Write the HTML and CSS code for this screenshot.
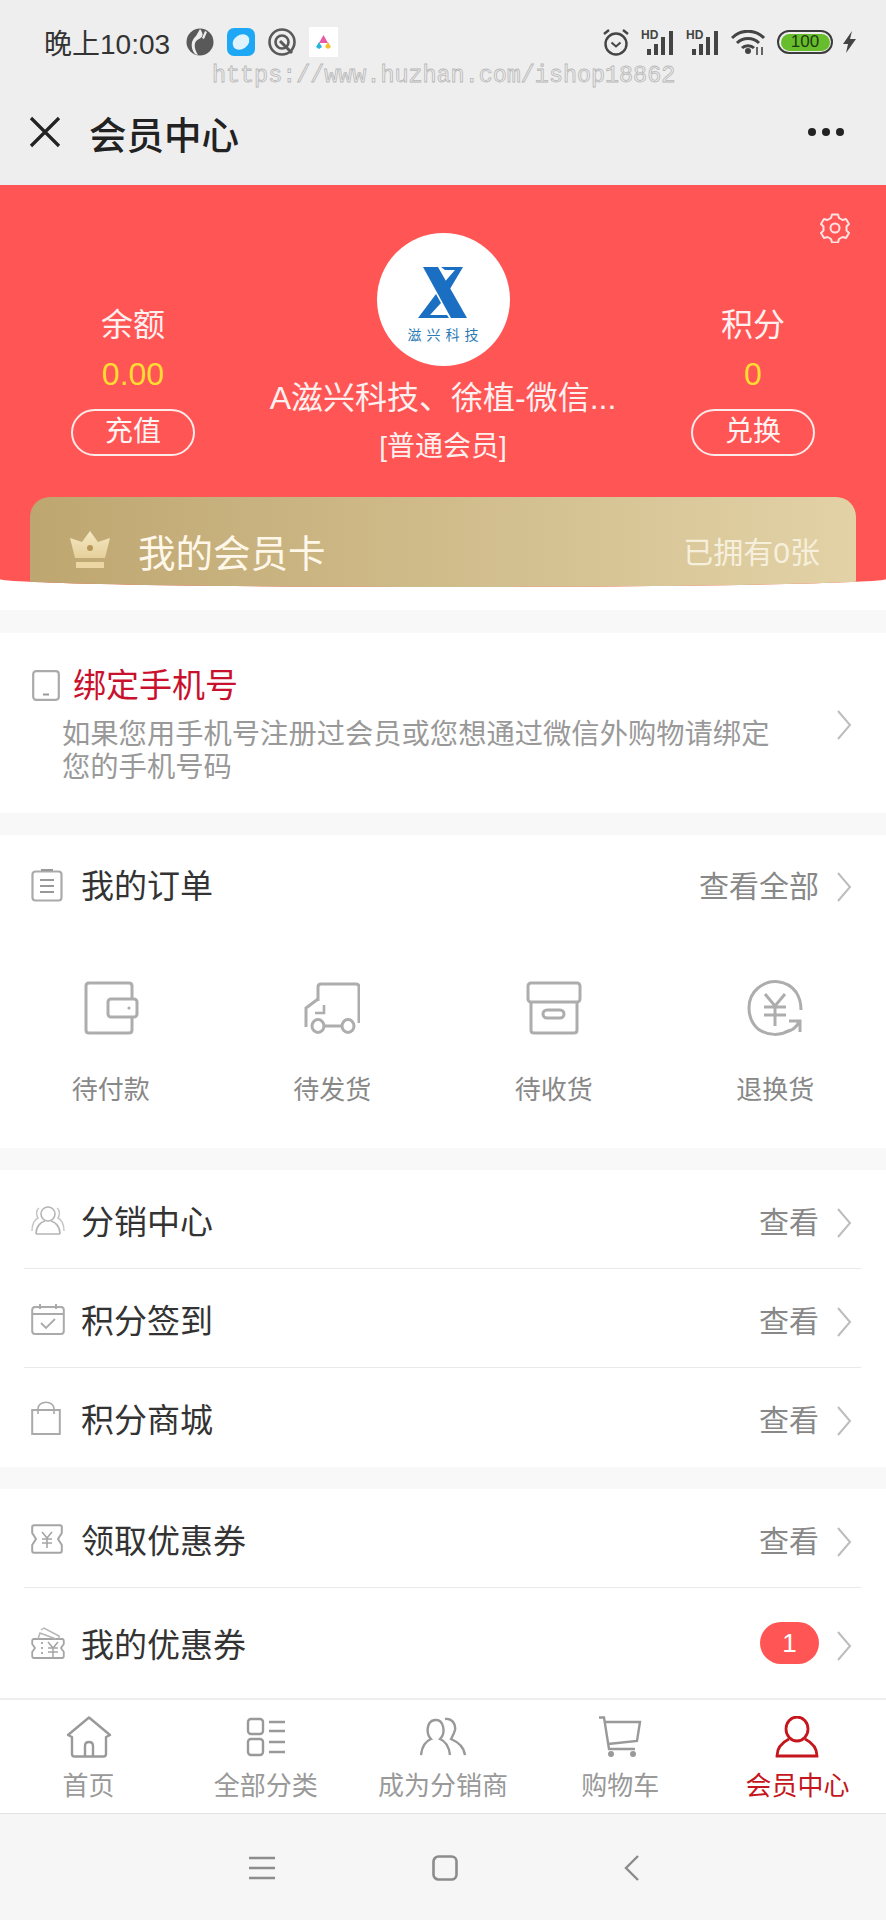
FILE: index.html
```html
<!DOCTYPE html>
<html lang="zh-CN">
<head>
    <meta charset="UTF-8">
    <meta name="viewport" content="width=device-width, initial-scale=1.0">
    <title>会员中心</title>
    <link rel="stylesheet" href="styles.css">
</head>
<body>
    <svg class="defs" width="0" height="0">
        <symbol id="chevron" viewBox="0 0 16 30">
            <path d="M2 1 L14 15 L2 29" fill="none" stroke="#bdbdbd" stroke-width="2"/>
        </symbol>
    </svg>

    <header class="header">
        <div class="status-bar">
            <span class="status-time">晚上10:03</span>
            <svg class="status-app" width="28" height="28" viewBox="0 0 28 28">
                <circle cx="14" cy="14" r="13.5" fill="#595959"/>
                <path d="M14 1 C18 6 17 9 13 11 C8 13 7 19 12 27 L9 26 C4 20 5 12 10 8 Z" fill="#eee"/>
                <path d="M19 3 L21 4 L18 11 L16 10 Z" fill="#eee"/>
            </svg>
            <svg class="status-app" width="28" height="28" viewBox="0 0 28 28">
                <rect width="28" height="28" rx="7" fill="#1ea7f4"/>
                <ellipse cx="14" cy="14" rx="9" ry="7" transform="rotate(-35 14 14)" fill="#dff3fd"/>
            </svg>
            <svg class="status-app" width="28" height="28" viewBox="0 0 28 28">
                <circle cx="14" cy="14" r="12.5" fill="none" stroke="#595959" stroke-width="2.6"/>
                <circle cx="14" cy="14" r="6.5" fill="none" stroke="#595959" stroke-width="2.6"/>
                <path d="M12 13 L24 25" stroke="#595959" stroke-width="3"/>
            </svg>
            <svg class="status-app" width="29" height="30" viewBox="0 0 29 30">
                <rect width="29" height="30" fill="#fff"/>
                <path d="M14.5 8 L19 16 H10 Z" fill="#e85aa8"/>
                <path d="M10 15 L13 20 L10 22 L7 20 Z" fill="#27b6d8"/>
                <path d="M19 15 L22 20 L19 22 L16 20 Z" fill="#f5c02c"/>
            </svg>

            <div class="status-right">
                <svg width="28" height="28" viewBox="0 0 28 28">
                    <circle cx="14" cy="16" r="10.5" fill="none" stroke="#444" stroke-width="2.4"/>
                    <path d="M9.5 14.5 L14 18.5 L18.5 14.5" fill="none" stroke="#444" stroke-width="2"/>
                    <path d="M2 6 L7 2 M26 6 L21 2" stroke="#444" stroke-width="2.4"/>
                </svg>
                <svg width="34" height="26" viewBox="0 0 34 26">
                    <text x="0" y="10" class="hd-text">HD</text>
                    <path d="M6 20 h4 v6 h-4 Z M13 15 h4 v11 h-4 Z M20 8 h4 v18 h-4 Z M28 2 h4 v24 h-4 Z" fill="#444"/>
                </svg>
                <svg width="34" height="26" viewBox="0 0 34 26">
                    <text x="0" y="10" class="hd-text">HD</text>
                    <path d="M6 20 h4 v6 h-4 Z M13 15 h4 v11 h-4 Z M20 8 h4 v18 h-4 Z M28 2 h4 v24 h-4 Z" fill="#444"/>
                </svg>
                <svg width="35" height="25" viewBox="0 0 35 25">
                    <path d="M1 8 C10 -1 24 -1 33 8 M6 13 C12 7 22 7 28 13 M11 18 C14 15 20 15 23 18" fill="none" stroke="#444" stroke-width="3"/>
                    <circle cx="17" cy="21" r="3" fill="#444"/>
                    <path d="M26 17 v8 M31 17 v8" stroke="#444" stroke-width="1.6"/>
                </svg>
                <div class="battery"><span class="battery-level">100</span></div>
                <svg width="15" height="22" viewBox="0 0 15 22">
                    <path d="M10 0 L1 13 H6 L4 22 L14 8 H8 Z" fill="#444"/>
                </svg>
            </div>
        </div>
        <div class="watermark">https://www.huzhan.com/ishop18862</div>
        <div class="title-bar">
            <svg class="close-icon" width="32" height="32" viewBox="0 0 32 32">
                <path d="M2 2 L30 30 M30 2 L2 30" stroke="#222" stroke-width="3.2"/>
            </svg>
            <h1 class="page-title">会员中心</h1>
            <div class="more-dots"><i></i><i></i><i></i></div>
        </div>
    </header>

    <div class="hero-wrap">
        <section class="hero">
            <svg class="gear-icon" width="30" height="30" viewBox="0 0 30 30">
                <path d="M12 1.5 h6 l1 3.5 l3.5 2 l3.5 -1 l3 5 l-2.5 2.5 v4 l2.5 2.5 l-3 5 l-3.5 -1 l-3.5 2 l-1 3.5 h-6 l-1 -3.5 l-3.5 -2 l-3.5 1 l-3 -5 l2.5 -2.5 v-4 l-2.5 -2.5 l3 -5 l3.5 1 l3.5 -2 Z" fill="none" stroke="#ffe3e3" stroke-width="2" stroke-linejoin="round"/>
                <circle cx="15" cy="15" r="4.5" fill="none" stroke="#ffe3e3" stroke-width="2"/>
            </svg>
            <div class="hero-stats">
                <div class="stat">
                    <div class="stat-label">余额</div>
                    <div class="stat-value">0.00</div>
                    <div class="stat-btn">充值</div>
                </div>
                <div class="profile">
                    <div class="avatar">
                        <svg class="avatar-logo" width="51" height="52" viewBox="0 0 51 52">
                            <path d="M5 0 H20 L49 51 H33 Z" fill="#1b6fc2"/>
                            <path d="M45 0 H23 L27 3 H37 L24 18 L29 27 Z" fill="#1b6fc2"/>
                            <path d="M0 51 L18 27 L23 36 L12 48 H29 L31 51 Z" fill="#1b6fc2"/>
                        </svg>
                        <span class="avatar-name">滋兴科技</span>
                    </div>
                    <div class="profile-name">A滋兴科技、徐植-微信...</div>
                    <div class="profile-level">[普通会员]</div>
                </div>
                <div class="stat">
                    <div class="stat-label">积分</div>
                    <div class="stat-value">0</div>
                    <div class="stat-btn">兑换</div>
                </div>
            </div>
            <div class="vip-card">
                <svg class="crown" width="42" height="38" viewBox="0 0 42 38">
                    <defs>
                        <linearGradient id="crownFill" x1="0" y1="0" x2="0" y2="1">
                            <stop offset="0" stop-color="#f5e8c2"/>
                            <stop offset="1" stop-color="#e6d09c"/>
                        </linearGradient>
                    </defs>
                    <path d="M21 0 L29 11 L41 7 L36 27 H6 L1 7 L13 11 Z" fill="url(#crownFill)"/>
                    <circle cx="21" cy="17" r="3" fill="#b9975a"/>
                    <rect x="7" y="31" width="28" height="6" fill="#ecd7a4"/>
                </svg>
                <span class="vip-title">我的会员卡</span>
                <span class="vip-count">已拥有0张</span>
            </div>
        </section>
    </div>

    <section class="section bind">
        <div class="bind-main">
            <div class="bind-title">
                <svg width="28" height="31" viewBox="0 0 28 31">
                    <rect x="1.2" y="1.2" width="25.6" height="28.6" rx="3" fill="none" stroke="#aaa" stroke-width="2.2"/>
                    <path d="M11 24.5 H17" stroke="#999" stroke-width="2"/>
                </svg>
                <span>绑定手机号</span>
            </div>
            <p class="bind-desc">如果您用手机号注册过会员或您想通过微信外购物请绑定您的手机号码</p>
        </div>
        <svg class="chevron"><use href="#chevron"/></svg>
    </section>

    <section class="section orders">
        <div class="row orders-head">
            <svg class="row-icon" width="32" height="34" viewBox="0 0 32 34">
                <rect x="1.5" y="3.5" width="29" height="29" rx="3" fill="none" stroke="#aaa" stroke-width="2.2"/>
                <path d="M10 2 H22 M9 12 H23 M9 18 H23 M9 24 H23" stroke="#999" stroke-width="2.2"/>
            </svg>
            <span class="row-title">我的订单</span>
            <span class="row-more">查看全部</span>
            <svg class="chevron"><use href="#chevron"/></svg>
        </div>
        <div class="order-grid">
            <div class="order-item">
                <svg width="56" height="56" viewBox="0 0 56 56">
                    <path d="M49 19 V6 Q49 3 46 3 H6 Q3 3 3 6 V50 Q3 53 6 53 H46 Q49 53 49 50 V37" fill="none" stroke="#adadad" stroke-width="3"/>
                    <rect x="25" y="19" width="29" height="18" rx="3" fill="none" stroke="#adadad" stroke-width="3"/>
                    <circle cx="46" cy="28" r="1.6" fill="#adadad"/>
                </svg>
                <span>待付款</span>
            </div>
            <div class="order-item">
                <svg width="56" height="56" viewBox="0 0 56 56">
                    <path d="M14 21 V7 Q14 4 17 4 H52 Q55 4 55 7 V43 M2 47 V28 L14 19" fill="none" stroke="#adadad" stroke-width="3"/>
                    <path d="M20 25 V33 H11" fill="none" stroke="#adadad" stroke-width="2.6"/>
                    <ellipse cx="14" cy="46" rx="6" ry="6.5" fill="none" stroke="#adadad" stroke-width="3"/>
                    <ellipse cx="44" cy="46" rx="6" ry="6.5" fill="none" stroke="#adadad" stroke-width="3"/>
                    <path d="M20 46 H38" stroke="#adadad" stroke-width="3"/>
                </svg>
                <span>待发货</span>
            </div>
            <div class="order-item">
                <svg width="56" height="56" viewBox="0 0 56 56">
                    <rect x="2" y="3" width="52" height="19" rx="3" fill="none" stroke="#adadad" stroke-width="3"/>
                    <path d="M5 22 V50 Q5 53 8 53 H48 Q51 53 51 50 V22" fill="none" stroke="#adadad" stroke-width="3"/>
                    <rect x="17" y="30" width="21" height="8" rx="4" fill="none" stroke="#adadad" stroke-width="3"/>
                </svg>
                <span>待收货</span>
            </div>
            <div class="order-item">
                <svg width="56" height="56" viewBox="0 0 56 56">
                    <path d="M43 50 C34 56 21 56 11 49 C-1 38 -1 18 11 8 C23 -2 40 0 49 12 C53 18 54 24 54 30" fill="none" stroke="#adadad" stroke-width="3"/>
                    <path d="M18 14 L28 26 L38 14 M17 27 H39 M17 35 H39 M28 26 V46" fill="none" stroke="#adadad" stroke-width="3"/>
                    <path d="M38 52 C45 51 49 48 52 42 M42 41 H53 V52" fill="none" stroke="#adadad" stroke-width="3"/>
                </svg>
                <span>退换货</span>
            </div>
        </div>
    </section>

    <section class="section menu">
        <div class="row menu-row">
            <svg class="row-icon" width="34" height="30" viewBox="0 0 34 30">
                <circle cx="17" cy="9" r="7" fill="none" stroke="#b5b5b5" stroke-width="1.6"/>
                <path d="M5 29 C5 21 10 17 14 16 M29 29 C29 21 24 17 20 16 M5 29 H29" fill="none" stroke="#b5b5b5" stroke-width="1.6"/>
                <path d="M8 3 C5 5 5 10 7 13 C3 15 1 20 1 26 M26 3 C29 5 29 10 27 13 C31 15 33 20 33 26" fill="none" stroke="#c4c4c4" stroke-width="1.4"/>
            </svg>
            <span class="row-title">分销中心</span>
            <span class="row-more">查看</span>
            <svg class="chevron"><use href="#chevron"/></svg>
        </div>
        <div class="row menu-row">
            <svg class="row-icon" width="34" height="32" viewBox="0 0 34 32">
                <rect x="1.2" y="4" width="31.6" height="27" rx="3" fill="none" stroke="#aaa" stroke-width="2"/>
                <path d="M1.2 11 H32.8 M9 1 V6 M25 1 V6" stroke="#aaa" stroke-width="2"/>
                <path d="M10 20 L15 25 L24 16" fill="none" stroke="#aaa" stroke-width="1.8"/>
            </svg>
            <span class="row-title">积分签到</span>
            <span class="row-more">查看</span>
            <svg class="chevron"><use href="#chevron"/></svg>
        </div>
        <div class="row menu-row">
            <svg class="row-icon" width="30" height="34" viewBox="0 0 30 34">
                <rect x="1.2" y="9" width="27.6" height="24" fill="none" stroke="#aaa" stroke-width="2"/>
                <path d="M7 13 V8 C7 -1 23 -1 23 8 V13" fill="none" stroke="#aaa" stroke-width="1.6"/>
            </svg>
            <span class="row-title">积分商城</span>
            <span class="row-more">查看</span>
            <svg class="chevron"><use href="#chevron"/></svg>
        </div>
    </section>

    <section class="section menu">
        <div class="row menu-row">
            <svg class="row-icon" width="32" height="30" viewBox="0 0 32 30">
                <path d="M1.2 3 Q1.2 1.2 3 1.2 H29 Q30.8 1.2 30.8 3 V9 L27 15 L30.8 21 V27 Q30.8 28.8 29 28.8 H3 Q1.2 28.8 1.2 27 V21 L5 15 L1.2 9 Z" fill="none" stroke="#a5a5a5" stroke-width="2"/>
                <path d="M11 8 L16 14 L21 8 M11 15 H21 M11 19 H21 M16 14 V24" fill="none" stroke="#a5a5a5" stroke-width="1.6"/>
            </svg>
            <span class="row-title">领取优惠券</span>
            <span class="row-more">查看</span>
            <svg class="chevron"><use href="#chevron"/></svg>
        </div>
        <div class="row menu-row last">
            <svg class="row-icon" width="34" height="32" viewBox="0 0 34 32">
                <path d="M1.2 14 Q1.2 12 3 12 H31 Q32.8 12 32.8 14 V17 L30 21 L32.8 25 V29 Q32.8 31 31 31 H3 Q1.2 31 1.2 29 V25 L4 21 L1.2 17 Z" fill="none" stroke="#a5a5a5" stroke-width="1.8"/>
                <path d="M7 12 L9 6 L25 12 M10 3 L13 1 L28 9 V12" fill="none" stroke="#b5b5b5" stroke-width="1.5"/>
                <path d="M11 15 V29" stroke="#a5a5a5" stroke-width="1.8" stroke-dasharray="2 3"/>
                <path d="M17 15 L22 21 L27 15 M17 21 H27 M17 25 H27 M22 21 V30" fill="none" stroke="#a5a5a5" stroke-width="1.5"/>
            </svg>
            <span class="row-title">我的优惠券</span>
            <span class="badge">1</span>
            <svg class="chevron"><use href="#chevron"/></svg>
        </div>
    </section>

    <nav class="tabbar">
        <div class="tab">
            <svg width="46" height="42" viewBox="0 0 46 42">
                <path d="M2 19 L23 1.5 L44 19 L40 21 V38 Q40 40.5 37.5 40.5 H8.5 Q6 40.5 6 38 V21 Z" fill="none" stroke="#999" stroke-width="2.4" stroke-linejoin="round"/>
                <path d="M19 40 V30 Q19 26 23 26 Q27 26 27 30 V40" fill="none" stroke="#999" stroke-width="2.4"/>
            </svg>
            <span>首页</span>
        </div>
        <div class="tab">
            <svg width="46" height="42" viewBox="0 0 46 42">
                <rect x="5" y="3" width="15" height="15" rx="3" fill="none" stroke="#999" stroke-width="2.4"/>
                <rect x="5" y="23" width="15" height="16" rx="3" fill="none" stroke="#999" stroke-width="2.4"/>
                <path d="M26 6 H42 M26 15 H42 M26 26 H42 M26 36 H42" stroke="#999" stroke-width="2.6"/>
            </svg>
            <span>全部分类</span>
        </div>
        <div class="tab">
            <svg width="46" height="42" viewBox="0 0 46 42">
                <path d="M1 39 C2 30 6 25 11 23 C6 18 6 5 15 4 C24 3 26 17 20 23 C25 25 29 30 30 39" fill="none" stroke="#999" stroke-width="2.4"/>
                <path d="M25 3 C32 2 36 8 35 14 C34 18 32 21 31 23 C38 26 44 31 45 39" fill="none" stroke="#999" stroke-width="2.4"/>
            </svg>
            <span>成为分销商</span>
        </div>
        <div class="tab">
            <svg width="44" height="42" viewBox="0 0 44 42">
                <path d="M1 1.5 H6 L11 33 H37" fill="none" stroke="#999" stroke-width="2.4"/>
                <path d="M7 6 H42 L39 25 L10 28" fill="none" stroke="#999" stroke-width="2.4"/>
                <circle cx="13" cy="38" r="3" fill="#999"/>
                <circle cx="35" cy="38" r="3" fill="#999"/>
            </svg>
            <span>购物车</span>
        </div>
        <div class="tab active">
            <svg width="46" height="42" viewBox="0 0 46 42">
                <ellipse cx="23" cy="13" rx="11" ry="12" fill="none" stroke="#c4161c" stroke-width="2.8"/>
                <path d="M15 23 C7 27 3 33 3 40 H43 C43 33 39 27 31 23" fill="none" stroke="#c4161c" stroke-width="2.8"/>
            </svg>
            <span>会员中心</span>
        </div>
    </nav>

    <div class="sys-nav">
        <svg width="26" height="24" viewBox="0 0 26 24">
            <path d="M0 2 H26 M0 12 H26 M0 22 H26" stroke="#8c8c8c" stroke-width="2.6"/>
        </svg>
        <svg width="26" height="26" viewBox="0 0 26 26">
            <rect x="1.5" y="1.5" width="23" height="23" rx="5" fill="none" stroke="#8c8c8c" stroke-width="2.6"/>
        </svg>
        <svg class="sys-back" width="16" height="26" viewBox="0 0 16 26">
            <path d="M14 1 L2 13 L14 25" fill="none" stroke="#8c8c8c" stroke-width="2.4"/>
        </svg>
    </div>
</body>
</html>
```

FILE: styles.css
```css
* {
    box-sizing: border-box;
}
html, body {
    margin: 0;
    padding: 0;
}
body {
    width: 886px;
    height: 1920px;
    overflow: hidden;
    position: relative;
    background-color: #f8f8f8;
    font-family: "Liberation Sans", "Noto Sans CJK SC", sans-serif;
    color: #333;
}
.defs {
    position: absolute;
}

/* top grey header */
.header {
    height: 185px;
    background-color: #eeeeee;
}
.status-bar {
    height: 84px;
    display: flex;
    align-items: center;
    padding: 0 29px 0 44px;
}
.status-time {
    font-size: 28px;
    color: #333;
    margin-right: 16px;
}
.status-app {
    margin-right: 13px;
}
.status-right {
    margin-left: auto;
    display: flex;
    align-items: center;
    gap: 11px;
}
.hd-text {
    font-size: 12px;
    font-weight: bold;
    fill: #444;
}
.battery {
    width: 56px;
    height: 24px;
    margin-right: -2px;
    border: 2.5px solid #3c3c3c;
    border-radius: 12px;
    padding: 1.5px;
    display: flex;
}
.battery-level {
    flex: 1;
    background-color: #67bd2b;
    border-radius: 9px;
    font-size: 17px;
    line-height: 16px;
    text-align: center;
    color: #1e3a10;
}
.watermark {
    position: absolute;
    left: 212px;
    top: 62px;
    font-family: "Liberation Mono", monospace;
    font-size: 23.4px;
    line-height: 28px;
    color: #eeeeee;
    -webkit-text-stroke: 0.8px #b8b8b8;
}
.title-bar {
    height: 96px;
    display: flex;
    align-items: center;
    padding: 0 42px 0 29px;
}
.close-icon {
    margin-right: 28px;
}
.page-title {
    margin: 0;
    font-size: 37.5px;
    font-weight: 500;
    color: #222;
}
.more-dots {
    margin-left: auto;
    display: flex;
    gap: 6px;
}
.more-dots i {
    width: 8px;
    height: 8px;
    border-radius: 50%;
    background-color: #222;
}

/* red member block */
.hero-wrap {
    background-color: #fff;
    padding-bottom: 23px;
}
.hero {
    position: relative;
    height: 402px;
    padding-top: 48px;
    overflow: hidden;
    background-color: #ff5555;
    border-radius: 0 0 50% 50% / 0 0 8px 8px;
}
.gear-icon {
    position: absolute;
    right: 36px;
    top: 28px;
}
.hero-stats {
    display: grid;
    grid-template-columns: 266px 354px 266px;
    height: 233px;
}
.stat {
    display: flex;
    flex-direction: column;
    align-items: center;
    padding-top: 70px;
}
.stat-label {
    font-size: 32px;
    line-height: 44px;
    color: #fff0f0;
}
.stat-value {
    margin-top: 5px;
    font-size: 32px;
    line-height: 44px;
    color: #ffdc32;
}
.stat-btn {
    margin-top: 13px;
    width: 124px;
    height: 47px;
    border: 2px solid #ffeaea;
    border-radius: 24px;
    font-size: 28px;
    line-height: 41px;
    text-align: center;
    color: #fff4f4;
}
.profile {
    display: flex;
    flex-direction: column;
    align-items: center;
}
.avatar {
    width: 133px;
    height: 133px;
    border-radius: 50%;
    background-color: #fff;
    display: flex;
    flex-direction: column;
    align-items: center;
    padding-top: 34px;
}
.avatar-name {
    margin-top: 7px;
    font-size: 14px;
    line-height: 18px;
    letter-spacing: 5px;
    margin-right: -5px;
    color: #2c7ab5;
}
.profile-name {
    margin-top: 10px;
    font-size: 32px;
    line-height: 44px;
    color: #fff0f0;
}
.profile-level {
    margin-top: 7px;
    font-size: 28px;
    line-height: 40px;
    color: #fff0f0;
}
.vip-card {
    margin: 31px 30px 0;
    height: 112px;
    padding: 0 36px 6px 39px;
    display: flex;
    align-items: center;
    border-radius: 20px 20px 0 0;
    background: linear-gradient(90deg, #bea670, #e2d2a6);
}
.crown {
    margin-right: 27px;
}
.vip-title {
    font-size: 37.5px;
    color: #fff8ea;
}
.vip-count {
    margin-left: auto;
    font-size: 30px;
    color: #f6efdc;
}

/* white sections */
.section {
    background-color: #fff;
    margin-top: 22px;
}
.chevron {
    flex: none;
    width: 16px;
    height: 30px;
    margin-left: 17px;
}
.row .chevron {
    margin-top: 6px;
}
.bind {
    margin-top: 23px;
    height: 180px;
    display: flex;
    align-items: center;
    padding: 4px 34px 0 32px;
}
.bind-main {
    flex: 1;
    margin-top: -3px;
}
.bind-title {
    display: flex;
    align-items: center;
    gap: 13px;
    font-size: 33px;
    line-height: 44px;
    color: #c9102c;
}
.bind-desc {
    margin: 10px 0 0 30px;
    width: 712px;
    font-size: 28.3px;
    line-height: 33px;
    color: #999;
}
.row {
    display: flex;
    align-items: center;
    padding: 0 34px 0 32px;
}
.row-icon {
    flex: none;
    margin-left: -1px;
}
.row-title {
    position: absolute;
    left: 81px;
    font-size: 33px;
    color: #333;
}
.row-more {
    margin-left: auto;
    font-size: 30px;
    color: #888;
}
.orders {
    height: 313px;
}
.orders-head {
    height: 97px;
}
.orders-head .row-icon {
    margin-top: 3px;
}
.order-grid {
    display: grid;
    grid-template-columns: repeat(4, 1fr);
    padding-top: 48px;
}
.order-item {
    display: flex;
    flex-direction: column;
    align-items: center;
    gap: 36px;
    font-size: 26px;
    line-height: 36px;
    color: #888;
}
.menu-row {
    height: 99px;
    position: relative;
}
.menu-row::after {
    content: "";
    position: absolute;
    left: 24px;
    right: 25px;
    bottom: 0;
    height: 1px;
    background-color: #e9e9e9;
}
.menu-row:last-child::after {
    display: none;
}
.menu-row.last {
    height: 110px;
}
.badge {
    margin-left: auto;
    width: 59px;
    height: 42px;
    border-radius: 21px;
    background-color: #ff5555;
    color: #fff;
    font-size: 26px;
    line-height: 42px;
    text-align: center;
}

/* bottom tabs */
.tabbar {
    height: 116px;
    display: grid;
    grid-template-columns: repeat(5, 1fr);
    background-color: #fff;
    border-top: 2px solid #eeeeee;
    border-bottom: 1px solid #e2e2e2;
    padding-top: 16px;
}
.tab {
    display: flex;
    flex-direction: column;
    align-items: center;
    gap: 10px;
    font-size: 26px;
    line-height: 36px;
    color: #999;
}
.tab.active {
    color: #c4161c;
}
.sys-nav {
    height: 107px;
    display: flex;
    align-items: center;
    gap: 157px;
    background-color: #f6f6f6;
    padding-left: 249px;
}
.sys-back {
    margin-left: 9px;
}
```
